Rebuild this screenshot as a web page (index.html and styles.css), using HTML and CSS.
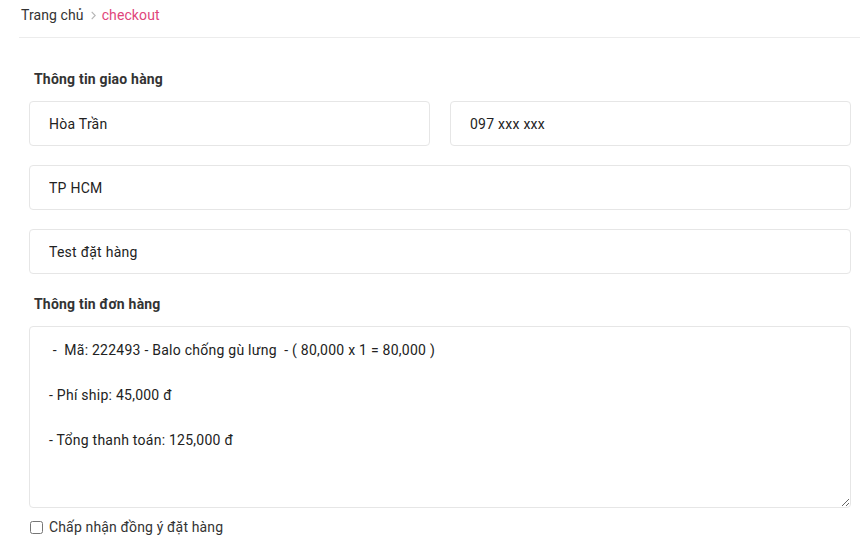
FILE: index.html
```html
<!DOCTYPE html>
<html lang="vi">
<head>
<meta charset="utf-8">
<title>checkout</title>
<link rel="stylesheet" href="styles.css">
</head>
<body>
<nav class="breadcrumb">
  <a class="crumb" href="#">Trang chủ</a>
  <svg class="sep" width="5" height="9" viewBox="0 0 5 9" aria-hidden="true"><path d="M0.7 0.8 L4.2 4.5 L0.7 8.2" fill="none" stroke="#b5b5b5" stroke-width="1.1"/></svg>
  <span class="current">checkout</span>
</nav>
<form class="checkout">
  <h3 class="section-title first">Thông tin giao hàng</h3>
  <div class="row two">
    <input class="field" type="text" value="Hòa Trần">
    <input class="field" type="text" value="097 xxx xxx">
  </div>
  <div class="row">
    <input class="field" type="text" value="TP HCM">
  </div>
  <div class="row">
    <input class="field" type="text" value="Test đặt hàng">
  </div>
  <h3 class="section-title">Thông tin đơn hàng</h3>
  <textarea class="field area"> -  Mã: 222493 - Balo chống gù lưng  - ( 80,000 x 1 = 80,000 )

- Phí ship: 45,000 đ

- Tổng thanh toán: 125,000 đ</textarea>
  <label class="agree"><input type="checkbox" class="check"><span>Chấp nhận đồng ý đặt hàng</span></label>
</form>
</body>
</html>
```
FILE: styles.css
```css
* { box-sizing: border-box; }
html, body {
  margin: 0;
  background: #fff;
  font-family: Roboto, "Noto Sans", Arial, sans-serif;
  font-size: 14px;
  color: #333;
  letter-spacing: 0.25px;
}
.breadcrumb {
  margin-left: 19px;
  width: 841px;
  padding: 5px 0 12px 2px;
  line-height: 20px;
  border-bottom: 1px solid #ececec;
  display: flex;
  align-items: center;
  letter-spacing: 0.1px;
}
.crumb { color: #333; text-decoration: none; }
.sep { margin: 1px 6px 0 7px; display: block; }
.current { color: #e0457b; }
.checkout {
  margin-left: 29px;
  width: 822px;
  display: flex;
  flex-direction: column;
}
.section-title {
  margin: 20px 0 12px 5px;
  font-size: 14px;
  line-height: 20px;
  font-weight: 700;
  color: #333;
  letter-spacing: 0.2px;
}
.section-title.first { margin-top: 31px; }
.row { display: flex; gap: 20px; margin-bottom: 19px; }
.row:nth-of-type(3) { margin-bottom: 0; }
.field {
  flex: 1;
  min-width: 0;
  height: 45px;
  padding: 0 19px;
  border: 1px solid #e6e6e6;
  border-radius: 4px;
  font-family: Roboto, "Noto Sans", Arial, sans-serif;
  font-size: 14px;
  letter-spacing: 0.25px;
  color: #222;
  background: #fff;
  outline: none;
}
.area {
  display: block;
  flex: none;
  width: 822px;
  height: 182px;
  padding: 12px 19px;
  line-height: 22.4px;
  resize: vertical;
}
.agree {
  display: flex;
  align-items: center;
  gap: 6px;
  margin-top: 8px;
  padding-left: 1px;
  line-height: 22px;
  color: #333;
  letter-spacing: 0.15px;
}
.check { margin: 0; width: 13px; height: 13px; }
```
